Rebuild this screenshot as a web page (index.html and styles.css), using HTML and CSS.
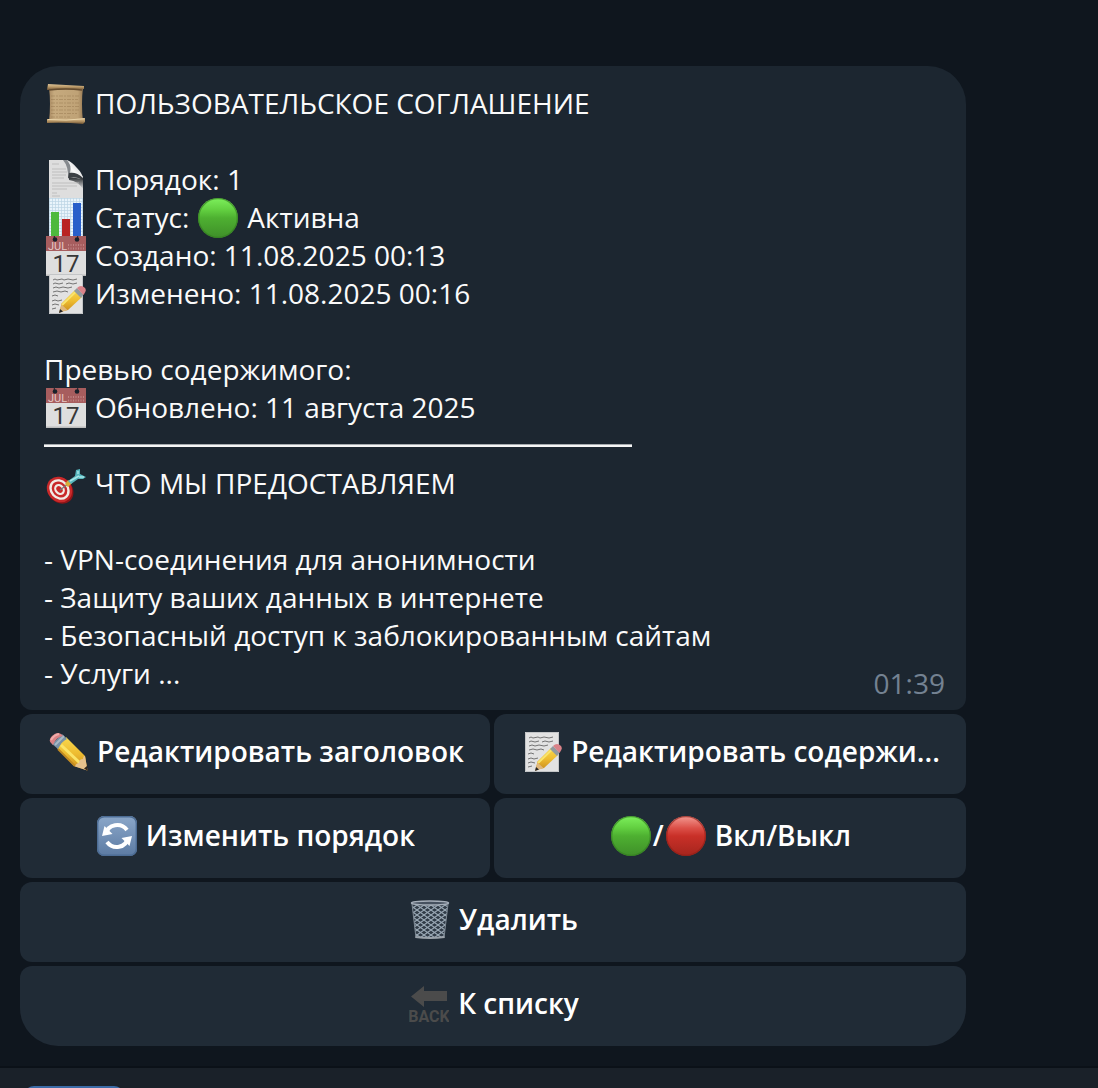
FILE: index.html
```html
<!DOCTYPE html>
<html lang="ru">
<head>
<meta charset="utf-8">
<meta name="viewport" content="width=device-width, initial-scale=1">
<title>Пользовательское соглашение</title>
<link rel="stylesheet" href="styles.css">
</head>
<body>
<svg class="sprite" width="0" height="0" aria-hidden="true">
  <defs>
    <linearGradient id="g-green" x1="0" y1="0" x2="0" y2="1"><stop offset="0" stop-color="#7df05c"/><stop offset=".3" stop-color="#62cf40"/><stop offset=".5" stop-color="#4eb031"/><stop offset="1" stop-color="#3f8f29"/></linearGradient>
    <linearGradient id="g-red" x1="0" y1="0" x2="0" y2="1"><stop offset="0" stop-color="#f39a92"/><stop offset=".3" stop-color="#dc5048"/><stop offset=".5" stop-color="#c93028"/><stop offset="1" stop-color="#a5251d"/></linearGradient>
    <linearGradient id="g-parch" x1="0" y1="0" x2="1" y2="0"><stop offset="0" stop-color="#a98a62"/><stop offset=".15" stop-color="#c6aa7e"/><stop offset=".85" stop-color="#bfa276"/><stop offset="1" stop-color="#9a7c55"/></linearGradient>
    <linearGradient id="g-roll" x1="0" y1="0" x2="0" y2="1"><stop offset="0" stop-color="#dcc397"/><stop offset=".5" stop-color="#b99867"/><stop offset="1" stop-color="#6d5233"/></linearGradient>
    <linearGradient id="g-pencil" x1="0" y1="0" x2="0" y2="1"><stop offset="0" stop-color="#f8d84e"/><stop offset=".5" stop-color="#eebc30"/><stop offset="1" stop-color="#c98c1d"/></linearGradient>
    <linearGradient id="g-blue" x1="0" y1="0" x2="0" y2="1"><stop offset="0" stop-color="#8ba7c9"/><stop offset="1" stop-color="#5c7ba3"/></linearGradient>
    <linearGradient id="g-curl" x1="0" y1="1" x2="1" y2="0"><stop offset="0" stop-color="#c4c6c8"/><stop offset=".4" stop-color="#fafafa"/><stop offset="1" stop-color="#b9bcbf"/></linearGradient>
    <linearGradient id="g-shade" x1="0" y1="0" x2="0" y2="1"><stop offset="0" stop-color="#25292d"/><stop offset="1" stop-color="#dedede"/></linearGradient>
    <pattern id="p-grid" width="3" height="3" patternUnits="userSpaceOnUse"><path d="M0 .5H3M.5 0V3" stroke="#bcd4e4" stroke-width=".7"/></pattern>
    <pattern id="p-mesh" width="7" height="5" patternUnits="userSpaceOnUse"><path d="M0 0L7 5M7 0L0 5" stroke="#9aa8b5" stroke-width="1.1"/></pattern>

    <symbol id="i-green" viewBox="0 0 40 40"><circle cx="20" cy="20" r="20" fill="url(#g-green)"/><circle cx="20" cy="20" r="19.3" fill="none" stroke="#327b20" stroke-opacity=".65" stroke-width="1.2"/></symbol>
    <symbol id="i-red" viewBox="0 0 40 40"><circle cx="20" cy="20" r="20" fill="url(#g-red)"/><circle cx="20" cy="20" r="19.3" fill="none" stroke="#8d1e17" stroke-opacity=".65" stroke-width="1.2"/></symbol>

    <symbol id="i-scroll" viewBox="0 0 40 40">
      <path d="M3 3H37Q35 20 37 38H3Q5 20 3 3Z" fill="url(#g-parch)"/>
      <path d="M5 12H34M5 15.500H32M5 19H34M5 22.500H33M5 26H34M5 29.500H31M5 33H24" stroke="#86683f" stroke-opacity=".35" stroke-dasharray="4 1 2 1"/>
      <path d="M2 0L38 2V5Q20 5 1 6Z" fill="url(#g-roll)"/><path d="M3 6Q20 4 36 6" fill="none" stroke="#634b2e" stroke-width="1.300"/>
      <path d="M1 35Q20 37 39 34V38L37 40Q18 38 1 39Z" fill="url(#g-roll)"/><path d="M2 35.500Q20 37 38 34.800" fill="none" stroke="#ead5aa"/>
    </symbol>

    <symbol id="i-page" viewBox="0 0 40 40">
      <path d="M3 0H21L37 17V40H3Z" fill="#dedede"/>
      <path d="M23 17L37 19V29Q32 21 23 20Z" fill="url(#g-shade)"/>
      <path d="M17 0H21L25 6V15L22 19Q23 7 17 0Z" fill="#85898d"/>
      <path d="M21 0Q26 5 24 13Q31 12 37 18Q36 13 31 8Q26 2 21 0Z" fill="url(#g-curl)"/>
      <path d="M23 13Q31 12 37 18V20Q30 16 22 18Z" fill="#3c4044"/>
      <path d="M6 4H13M6 9H20M6 12H21M6 15H20M6 18H18M6 23H33M6 26H31M6 29H21M6 33H11M6 36H14" stroke="#bababa" stroke-width=".9"/>
    </symbol>

    <symbol id="i-chart" viewBox="0 0 40 40">
      <path d="M3 0H37V40H3Z" fill="#e9f4fb"/><path d="M3 0H37V40H3Z" fill="url(#p-grid)"/>
      <path d="M5 14H13V40H5Z" fill="#4db93d"/><path d="M16 21H24V40H16Z" fill="#b92322"/><path d="M27 5H35V40H27Z" fill="#285fca"/>
    </symbol>

    <symbol id="i-calendar" viewBox="0 0 40 40">
      <path d="M0 0H40V40H0Z" fill="#dedede"/><path d="M0 0H40V15H0Z" fill="#a75d5e"/><path d="M0 38.500H40V40H0Z" fill="#bcbcbc"/>
      <circle cx="9" cy="3.500" r="2.300" fill="#18202a"/><circle cx="31" cy="3.500" r="2.300" fill="#18202a"/><path d="M8.300 0V4M31.700 0V4" stroke="#18202a"/>
      <text x="2" y="13.500" class="cal-month">JUL</text>
      <path d="M22 9H38M22 12.500H38" stroke="#d9aaa8" stroke-opacity=".5" stroke-width="2" stroke-dasharray="1 1.500"/>
      <text x="20" y="35.500" text-anchor="middle" class="cal-day">17</text>
    </symbol>

    <symbol id="i-memo" viewBox="0 0 40 40">
      <path d="M3 0H37V40H3Z" fill="#e2e2e2"/><path d="M3.500 .500H36.500V39.500H3.500Z" fill="none" stroke="#c3c5c7"/>
      <path d="M7 6L9 5L11 6L16 5L18 6L22 5L27 6L31 5M7 10L9 9L13 10L17 9M20 10L23 9L27 10L31 9M7 14L10 13L13 14L17 13L22 14L26 13M7 18L11 17L15 18L19 17L22 18M6 22L9 21L12 22M6 27L9 26L12 27L16 26M6 31L9 30L13 31M6 35L10 34" fill="none" stroke="#666" stroke-width=".9"/>
      <path d="M13.500 38L15.500 29.500L29 16L36 23L22 36Z" fill="url(#g-pencil)"/>
      <path d="M16 31L30 17.500" stroke="#f9e46c" stroke-width="2"/><path d="M13 39L15.500 30.500L21.500 36Z" fill="#dfb77b"/><path d="M13 39L14 35L17 37.500Z" fill="#252525"/>
      <path d="M28 17L31 14L37.500 20.500L35 24Z" fill="#929b9f"/><path d="M31 14Q35 10 39 14Q41 17 37.500 21Z" fill="#d98288"/>
    </symbol>

    <symbol id="i-target" viewBox="0 0 40 40">
      <ellipse cx="14.500" cy="26.500" rx="12" ry="14" transform="rotate(-42 14.500 26.500)" fill="#8d1518"/>
      <ellipse cx="13.500" cy="25.500" rx="12" ry="13.500" transform="rotate(-42 13.500 25.500)" fill="#c9292a"/>
      <ellipse cx="13.500" cy="25.500" rx="8.300" ry="9.800" transform="rotate(-42 13.500 25.500)" fill="none" stroke="#f1ebe6" stroke-width="2.400"/>
      <ellipse cx="13.500" cy="25.500" rx="3.800" ry="4.800" transform="rotate(-42 13.500 25.500)" fill="none" stroke="#f1ebe6" stroke-width="2.200"/>
      <path d="M14 26L22 20" stroke="#777" stroke-width="1.300"/><path d="M19 20L22 16L26 19L22 23Z" fill="#d8ad39"/>
      <path d="M22 17L29 12L30 6L34 5L34 10L40 13L37 15L32 15L25 20Z" fill="#57b6bd"/><path d="M24 17L33 12M32 7L32 10M38 13L33 13" stroke="#a7e6e7" stroke-width="1.500"/>
    </symbol>

    <symbol id="i-pencil" viewBox="0 0 40 40">
      <path d="M9 16L18 5L37 24L39.500 38.500L26 34Z" fill="url(#g-pencil)"/><path d="M13 13L32 31" stroke="#fbe468" stroke-width="3"/><path d="M10 17L27 34" stroke="#c18a22" stroke-width="2"/>
      <path d="M27 34.500Q28 31 31 31Q31 27 35 27Q35 24 37 24L39.500 38.500Z" fill="#e6c28d"/><path d="M36 36.500L39 34L40 39Z" fill="#33281e"/>
      <path d="M4 12L14 2L19 7Q14 9 10 17Z" fill="#7891a6"/><path d="M7 13L16 4" stroke="#a9bac6" stroke-width="2"/>
      <path d="M3 11Q0 8 4 4Q9-1 13 2L15 4Q8 5 5 13Z" fill="#da8285"/><path d="M3 8Q6 3 11 2" fill="none" stroke="#f0abaa" stroke-width="2"/>
    </symbol>

    <symbol id="i-refresh" viewBox="0 0 40 40">
      <rect width="40" height="40" rx="7" fill="url(#g-blue)"/><rect x=".700" y=".700" width="38.600" height="38.600" rx="6.500" fill="none" stroke="#4d6d95" stroke-width="1.400"/>
      <path d="M9 18C11 8 24 6 30 14" fill="none" stroke="#fff" stroke-width="4"/><path d="M5 20L7.500 10L15.500 18Z" fill="#fff"/>
      <path d="M31 22C29 32 16 34 10 26" fill="none" stroke="#fff" stroke-width="4"/><path d="M35 20L32.500 30L24.500 22Z" fill="#fff"/>
    </symbol>

    <symbol id="i-trash" viewBox="0 0 40 40">
      <path d="M2 4H38L34 38H6Z" fill="#303b46"/><path d="M2 4H38L34 38H6Z" fill="url(#p-mesh)"/>
      <path d="M2 4L6 38M38 4L34 38" stroke="#7c8792"/><ellipse cx="20" cy="3" rx="18.500" ry="2" fill="#46515f" stroke="#a5aeb9" stroke-width="1.500"/>
      <path d="M5.500 37Q20 39 34.500 37" fill="none" stroke="#9aa2aa" stroke-width="2.200"/>
    </symbol>

    <symbol id="i-back" viewBox="0 0 40 40">
      <path d="M2 12.500L15 2V7H38V17H15V23Z" fill="#4b4b4b"/><text x="20" y="38" text-anchor="middle" class="back-word">BACK</text>
    </symbol>
  </defs>
</svg>

<main class="chat">
  <article class="message">
    <div class="bubble">
      <p class="line"><svg class="emoji"><use href="#i-scroll"/></svg><span>ПОЛЬЗОВАТЕЛЬСКОЕ СОГЛАШЕНИЕ</span></p>
      <div class="group">
        <p class="line"><svg class="emoji"><use href="#i-page"/></svg><span>Порядок: 1</span></p>
        <p class="line"><svg class="emoji"><use href="#i-chart"/></svg><span>Статус:</span><svg class="emoji"><use href="#i-green"/></svg><span>Активна</span></p>
        <p class="line"><svg class="emoji"><use href="#i-calendar"/></svg><span>Создано: 11.08.2025 00:13</span></p>
        <p class="line"><svg class="emoji"><use href="#i-memo"/></svg><span>Изменено: 11.08.2025 00:16</span></p>
      </div>
      <div class="group">
        <p class="line"><span>Превью содержимого:</span></p>
        <p class="line"><svg class="emoji"><use href="#i-calendar"/></svg><span>Обновлено: 11 августа 2025</span></p>
        <hr class="rule">
        <p class="line"><svg class="emoji"><use href="#i-target"/></svg><span>ЧТО МЫ ПРЕДОСТАВЛЯЕМ</span></p>
      </div>
      <div class="group">
        <p class="line">- VPN-соединения для анонимности</p>
        <p class="line">- Защиту ваших данных в интернете</p>
        <p class="line">- Безопасный доступ к заблокированным сайтам</p>
        <p class="line">- Услуги ...</p>
      </div>
      <time class="time">01:39</time>
    </div>
    <div class="keyboard">
      <button class="key" type="button"><svg class="emoji"><use href="#i-pencil"/></svg><span class="label">Редактировать заголовок</span></button>
      <button class="key" type="button"><svg class="emoji"><use href="#i-memo"/></svg><span class="label">Редактировать содержи...</span></button>
      <button class="key" type="button"><svg class="emoji"><use href="#i-refresh"/></svg><span class="label">Изменить порядок</span></button>
      <button class="key" type="button"><span class="pair"><svg class="emoji"><use href="#i-green"/></svg>/<svg class="emoji"><use href="#i-red"/></svg></span><span class="label">Вкл/Выкл</span></button>
      <button class="key wide" type="button"><svg class="emoji"><use href="#i-trash"/></svg><span class="label">Удалить</span></button>
      <button class="key wide last" type="button"><svg class="emoji"><use href="#i-back"/></svg><span class="label">К списку</span></button>
    </div>
  </article>
</main>
<footer class="composer"><button class="menu" type="button" aria-label="Меню"></button></footer>
</body>
</html>
```
FILE: styles.css
```css
* { box-sizing: border-box; }

body {
  display: flex;
  flex-direction: column;
  min-height: 100vh;
  margin: 0;
  background: #0f161e;
  color: #fafafa;
  font: 28px/38px "Open Sans", "Noto Sans", sans-serif;
}

.sprite { position: absolute; }

.chat { flex: 1; padding: 66px 132px 20px 20px; }

.message { display: flex; flex-direction: column; gap: 4px; }

.bubble {
  position: relative;
  padding: 18px 24px;
  border-radius: 38px 38px 12px 12px;
  background: #1c2630;
}

.group { margin-top: 38px; }

.line {
  display: flex;
  align-items: center;
  gap: 7px;
  margin: 0;
}

.emoji {
  flex: none;
  width: 40px;
  height: 40px;
  margin: 0 2px -2px;
}

.rule {
  max-width: 588px;
  height: 3px;
  margin: 18px 0 17px;
  border: 0;
  border-top: 1px solid #a4a9ad;
  background: #f5f5f5;
}

.time {
  position: absolute;
  right: 21px;
  bottom: 8px;
  color: #748292;
}

.keyboard {
  display: grid;
  grid-template-columns: 470fr 472fr;
  gap: 4px;
}

.key {
  display: flex;
  align-items: center;
  justify-content: center;
  gap: 7px;
  min-width: 0;
  height: 80px;
  padding: 0 24px 6px;
  border: 0;
  border-radius: 12px;
  background: #202b36;
  color: #fff;
  font: inherit;
  font-weight: 600;
  cursor: pointer;
}

.label { overflow: hidden; white-space: nowrap; text-overflow: ellipsis; }
.pair { display: flex; align-items: center; }
.wide { grid-column: 1 / -1; }
.last { border-radius: 12px 12px 38px 38px; }

.composer {
  height: 22px;
  padding: 18px 24px 0;
  overflow: hidden;
  border-top: 2px solid #0b1118;
  background: #1a2129;
}

.menu {
  display: block;
  width: 100px;
  height: 60px;
  padding: 0;
  border: 0;
  border-radius: 10px;
  background: #3c6ca8;
}

.cal-month { fill: #e6c8c6; font: 11px Roboto, sans-serif; }
.cal-day { fill: #373737; font: 24px Roboto, sans-serif; }
.back-word { fill: #4b4b4b; font: bold 16px "Liberation Sans Narrow", Roboto, sans-serif; }
```
